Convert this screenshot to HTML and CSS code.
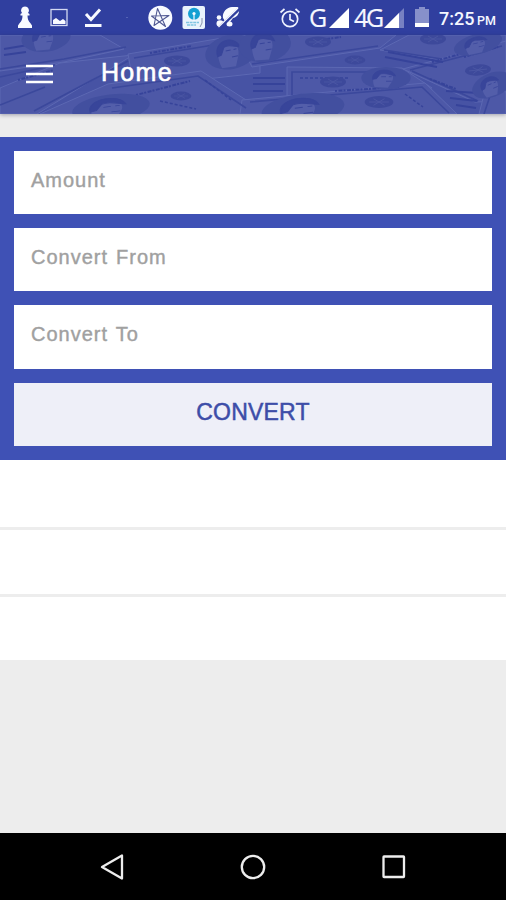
FILE: index.html
```
<!DOCTYPE html>
<html lang="en">
<head>
<meta charset="utf-8">
<title>Home</title>
<link rel="stylesheet" href="styles.css">
</head>
<body>
<div class="status">
  <svg class="status-icons" width="245" height="35" viewBox="0 0 245 35" fill="#f8faff">
    <path d="M25 6.500a4 4 0 0 1 3 6.600l1.500 1v1.500h-2c0 3.500 1 6 3 7.700l1.500 2.200V28H18v-2.500l1.500-2.200c2-1.700 3-4.200 3-7.700h-2v-1.500l1.500-1a4 4 0 0 1 3-6.600z"/>
    <rect x="51" y="9.500" width="16" height="16" fill="none" stroke="#d3d9f2" stroke-width="1.300"/>
    <path d="M53 24v-4l3-2 4 3 3-2 2.500 2v3z"/>
    <path d="M86 14l5 5.500L100 9.500" fill="none" stroke="#f8faff" stroke-width="3"/>
    <rect x="85" y="24" width="16.500" height="3"/>
    <circle cx="127" cy="17.500" r=".6" fill="#8090cf"/>
    <circle cx="160.300" cy="17.700" r="12"/>
    <path d="M157.500 8.500L165.500 26.500L151.500 16L169 15.500L154 25.500z" fill="none" stroke="#4f5792" stroke-width="1.100" stroke-linejoin="round"/>
    <rect x="182.500" y="6" width="22.500" height="23" rx="2" fill="#e9f2fc"/>
    <circle cx="194" cy="13.800" r="6" fill="#159fd2"/>
    <path d="M193.400 14h1.200v7h-1.200z"/><circle cx="194" cy="13.500" r="1.600"/>
    <path d="M186 22.500h13M187 25h9" stroke="#7fc4e1" stroke-width="1.300" stroke-dasharray="3 .6"/>
    <path d="M202 18v5l-2 4" fill="none" stroke="#8791aa" stroke-width="1"/>
    <circle cx="219" cy="17.500" r="2.300"/><ellipse cx="220" cy="23.500" rx="3.500" ry="3.200"/>
    <path d="M223 18c-1-6 4-11 9-11h7c1 5-1 10-6 11l-3 4-5-1z"/>
    <ellipse cx="229.500" cy="24" rx="3" ry="2.500"/>
    <path d="M219 28l21-20" stroke="#303f9f" stroke-width="3.200"/>
    <path d="M218.500 27L238 8" fill="none" stroke="#f8faff" stroke-width="1.200"/>
  </svg>
  <svg class="alarm" width="22" height="22" viewBox="0 0 22 22" fill="none" stroke="#eef2ff" stroke-width="1.700">
    <circle cx="11" cy="12" r="7.700"/><path d="M11 7v5.500l4 2M1.500 5.500l4-3.500M20.500 5.500l-4-3.500"/>
  </svg>
  <span class="net g">G</span>
  <svg class="signal" width="20" height="20" viewBox="0 0 20 20"><path d="M0 20L20 0v20z" fill="#fff"/></svg>
  <span class="net lte">4G</span>
  <svg class="signal two" width="20" height="20" viewBox="0 0 20 20"><path d="M0 20L20 0v20z" fill="#7781c2"/><path d="M0 20L15 5v15z" fill="#fff"/></svg>
  <svg class="battery" width="15" height="21" viewBox="0 0 15 21"><path d="M4 0h6v2h4v18H0V2h4z" fill="#8790ca"/><path d="M0 16h14v4H0z" fill="#fff"/></svg>
  <span class="time">7:25</span><span class="pm">PM</span>
</div>
<header class="appbar">
  <svg class="notes" width="506" height="79" viewBox="0 0 506 79">
    <defs>
      <g id="portrait">
        <ellipse rx="26" ry="17" fill="#424f9f"/>
        <path d="M-12 14c-3-10-2-24 9-25 9 0 13 9 9 17L2 15z" fill="#535eaa"/>
        <path d="M-14 2c-2-17 21-19 24-5-8-3-12-5-16-3l-4 7zM-5-2h5m3 0h3M0 5h6" fill="#38459a" stroke="#38459a"/>
      </g>
      <g id="seal">
        <ellipse rx="13" ry="5.500" fill="#3d499b"/>
        <path d="M-9 0H9M-5-3L5 3M-5 3L5-3" stroke="#4d58a5" stroke-width=".8"/>
      </g>
    </defs>
    <rect width="506" height="79" fill="#4753a4"/>
    <g fill="#4d58a7" stroke="#5c68b3" stroke-width="1">
      <path d="M0 0h100l24 14-60 13L0 36z"/>
      <path d="M0 53l60-25 73-8-96 59H0z"/>
      <path d="M128 19L240 0h20v38l-126 14z"/>
      <path d="M40 79l68-30 93-13 56 36v7z"/>
      <path d="M236 0h160l-16 13-128 19z"/>
      <path d="M380 15L409 0h97v18l-66 7z"/>
      <path d="M287 32l115 1 30 20-145 8z"/>
      <path d="M242 65l183-17 32 31H240z"/>
      <path d="M403 34L506 6v60l-31 1z"/>
      <path d="M486 52l20 5v22h-27z"/>
    </g>
    <g fill="none" stroke="#3b489c" stroke-width="1.600">
      <path d="M0 34l64-10 62-12M0 42l55-12M34 76l94-50M134 23l110-18M0 70l45-18"/>
      <path d="M112 53l86-12 48 32M252 29l126-18M384 15l58 9M292 60V37h105M250 67l172-15 27 26M410 35l92-24M412 36l66 30M492 55l-8 24"/>
    </g>
    <g fill="none" stroke="#36439a" stroke-width="2">
      <path d="M253 43h32M253 49h32M253 56h30M388 17l55 10M385 22l52 10M446 56l32 2M450 63l27 3M456 70l20 3M4 14l30-5M4 20l22-3"/>
      <path d="M150 18l42-7M136 60l54-14M18 45l36-10M335 56l64-4M306 7l35-5M430 44l26 10M432 27l28-8M464 22l34-10" stroke-dasharray="2 1.500 4 1"/>
      <path d="M205 45l26 20M160 66l36 8M405 59l18 13M300 43h48" stroke-width="1.500" stroke-dasharray="3 2"/>
    </g>
    <use href="#portrait" transform="translate(46 3) rotate(-8) scale(.95 .8)"/>
    <use href="#portrait" transform="translate(231 17) rotate(-12)"/>
    <use href="#portrait" transform="translate(265 10) rotate(-8)"/>
    <use href="#portrait" transform="translate(111 73) rotate(-7) scale(1.500 .8)"/>
    <use href="#portrait" transform="translate(303 74) rotate(-7) scale(1.600 .9)"/>
    <use href="#portrait" transform="translate(386 43) scale(.95 .65)"/>
    <use href="#portrait" transform="translate(478 9) rotate(-15) scale(.95 .6)"/>
    <use href="#portrait" transform="translate(492 50) rotate(-22) scale(.8 .7)"/>
    <use href="#seal" transform="translate(177 26)"/>
    <use href="#seal" transform="translate(181 61) scale(.8)"/>
    <use href="#seal" transform="translate(318 7)"/>
    <use href="#seal" transform="translate(333 47)"/>
    <use href="#seal" transform="translate(379 67) scale(1.100)"/>
    <use href="#seal" transform="translate(433 4)"/>
    <use href="#seal" transform="translate(478 35) rotate(-6)"/>
    <use href="#seal" transform="translate(355 25) scale(.8)"/>
  </svg>
  <svg class="menu" width="27" height="20" viewBox="0 0 27 20"><path d="M0 2h27M0 10h27M0 18h27" stroke="#fff" stroke-width="2.600"/></svg>
  <h1 class="title">Home</h1>
</header>
<main class="content">
  <form class="converter">
    <div class="field">Amount</div>
    <div class="field">Convert From</div>
    <div class="field">Convert To</div>
    <button class="convert" type="button">CONVERT</button>
  </form>
  <div class="results">
    <div class="row"></div>
    <div class="row"></div>
    <div class="row"></div>
  </div>
</main>
<nav class="navbar">
  <svg class="nav-icon" width="28" height="28" viewBox="0 0 28 28"><path d="M3 14L23 2.500v23z"/></svg>
  <svg class="nav-icon" width="28" height="28" viewBox="0 0 28 28"><circle cx="14" cy="14" r="11.200"/></svg>
  <svg class="nav-icon" width="28" height="28" viewBox="0 0 28 28"><rect x="3.500" y="3.500" width="20.500" height="20.500" rx=".5"/></svg>
</nav>
</body>
</html>
```
FILE: styles.css
```
* { box-sizing: border-box; }
body {
  margin: 0;
  width: 506px;
  height: 900px;
  display: flex;
  flex-direction: column;
  overflow: hidden;
  background: #ededed;
  font-family: "Liberation Sans", Arial, sans-serif;
}
svg { display: block; flex: none; }
.status {
  height: 35px;
  flex: none;
  display: flex;
  align-items: center;
  background: #303f9f;
  color: #f5f7ff;
  white-space: nowrap;
}
.alarm { margin-left: 34px; }
.net {
  font-family: "Open Sans", sans-serif;
  font-size: 25px;
  line-height: 35px;
  -webkit-text-stroke: .2px #f5f7ff;
}
.g { width: 20px; margin-left: 8px; }
.lte { width: 28px; margin-left: 5px; letter-spacing: -2.200px; }
.signal.two { margin-left: 2px; }
.battery { margin-left: 11px; }
.time, .pm { font-family: Roboto, sans-serif; font-weight: 500; }
.time { margin: 1px 0 0 9px; width: 35px; font-size: 18px; line-height: 35px; }
.pm { margin: 5px 0 0 3px; font-size: 12.500px; }
.appbar {
  position: relative;
  z-index: 1;
  height: 79px;
  flex: none;
  display: flex;
  align-items: center;
  padding-left: 26px;
  box-shadow: 0 1px 4px rgba(40, 40, 70, .4);
}
.notes { position: absolute; inset: 0; }
.menu { position: relative; top: -1px; }
.title {
  position: relative;
  margin: -5px 0 0 48px;
  color: #fff;
  font-size: 25px;
  font-weight: 400;
  letter-spacing: 1.300px;
  -webkit-text-stroke: .6px #fff;
}
.content { flex: 1; padding-top: 22.500px; }
.converter {
  height: 323.500px;
  display: grid;
  grid-template-rows: repeat(4, minmax(0, 1fr));
  gap: 14px;
  padding: 14px;
  background: #3f51b5;
}
.field, .convert {
  border: 0;
  font-family: inherit;
}
.field {
  padding: 17px 17px 0;
  background: #fff;
  color: #a0a0a0;
  font-size: 20px;
  line-height: 25px;
  letter-spacing: 1px;
  word-spacing: 1.500px;
  -webkit-text-stroke: .4px #a0a0a0;
}
.convert {
  padding: 0 0 4px;
  background: #eeeff8;
  color: #3d4da8;
  font-size: 23px;
  letter-spacing: .2px;
  -webkit-text-stroke: .5px #3d4da8;
}
.results {
  height: 200px;
  display: flex;
  flex-direction: column;
  gap: 3px;
}
.row { flex: 1; background: #fff; }
.row:first-child { flex: 0 0 67px; }
.navbar {
  height: 67px;
  flex: none;
  display: grid;
  grid-template-columns: 28px 28px 28px;
  justify-content: center;
  align-items: center;
  column-gap: 112.500px;
  background: #000;
}
.nav-icon { fill: none; stroke: #ededed; stroke-width: 2.300; stroke-linejoin: round; }
```
